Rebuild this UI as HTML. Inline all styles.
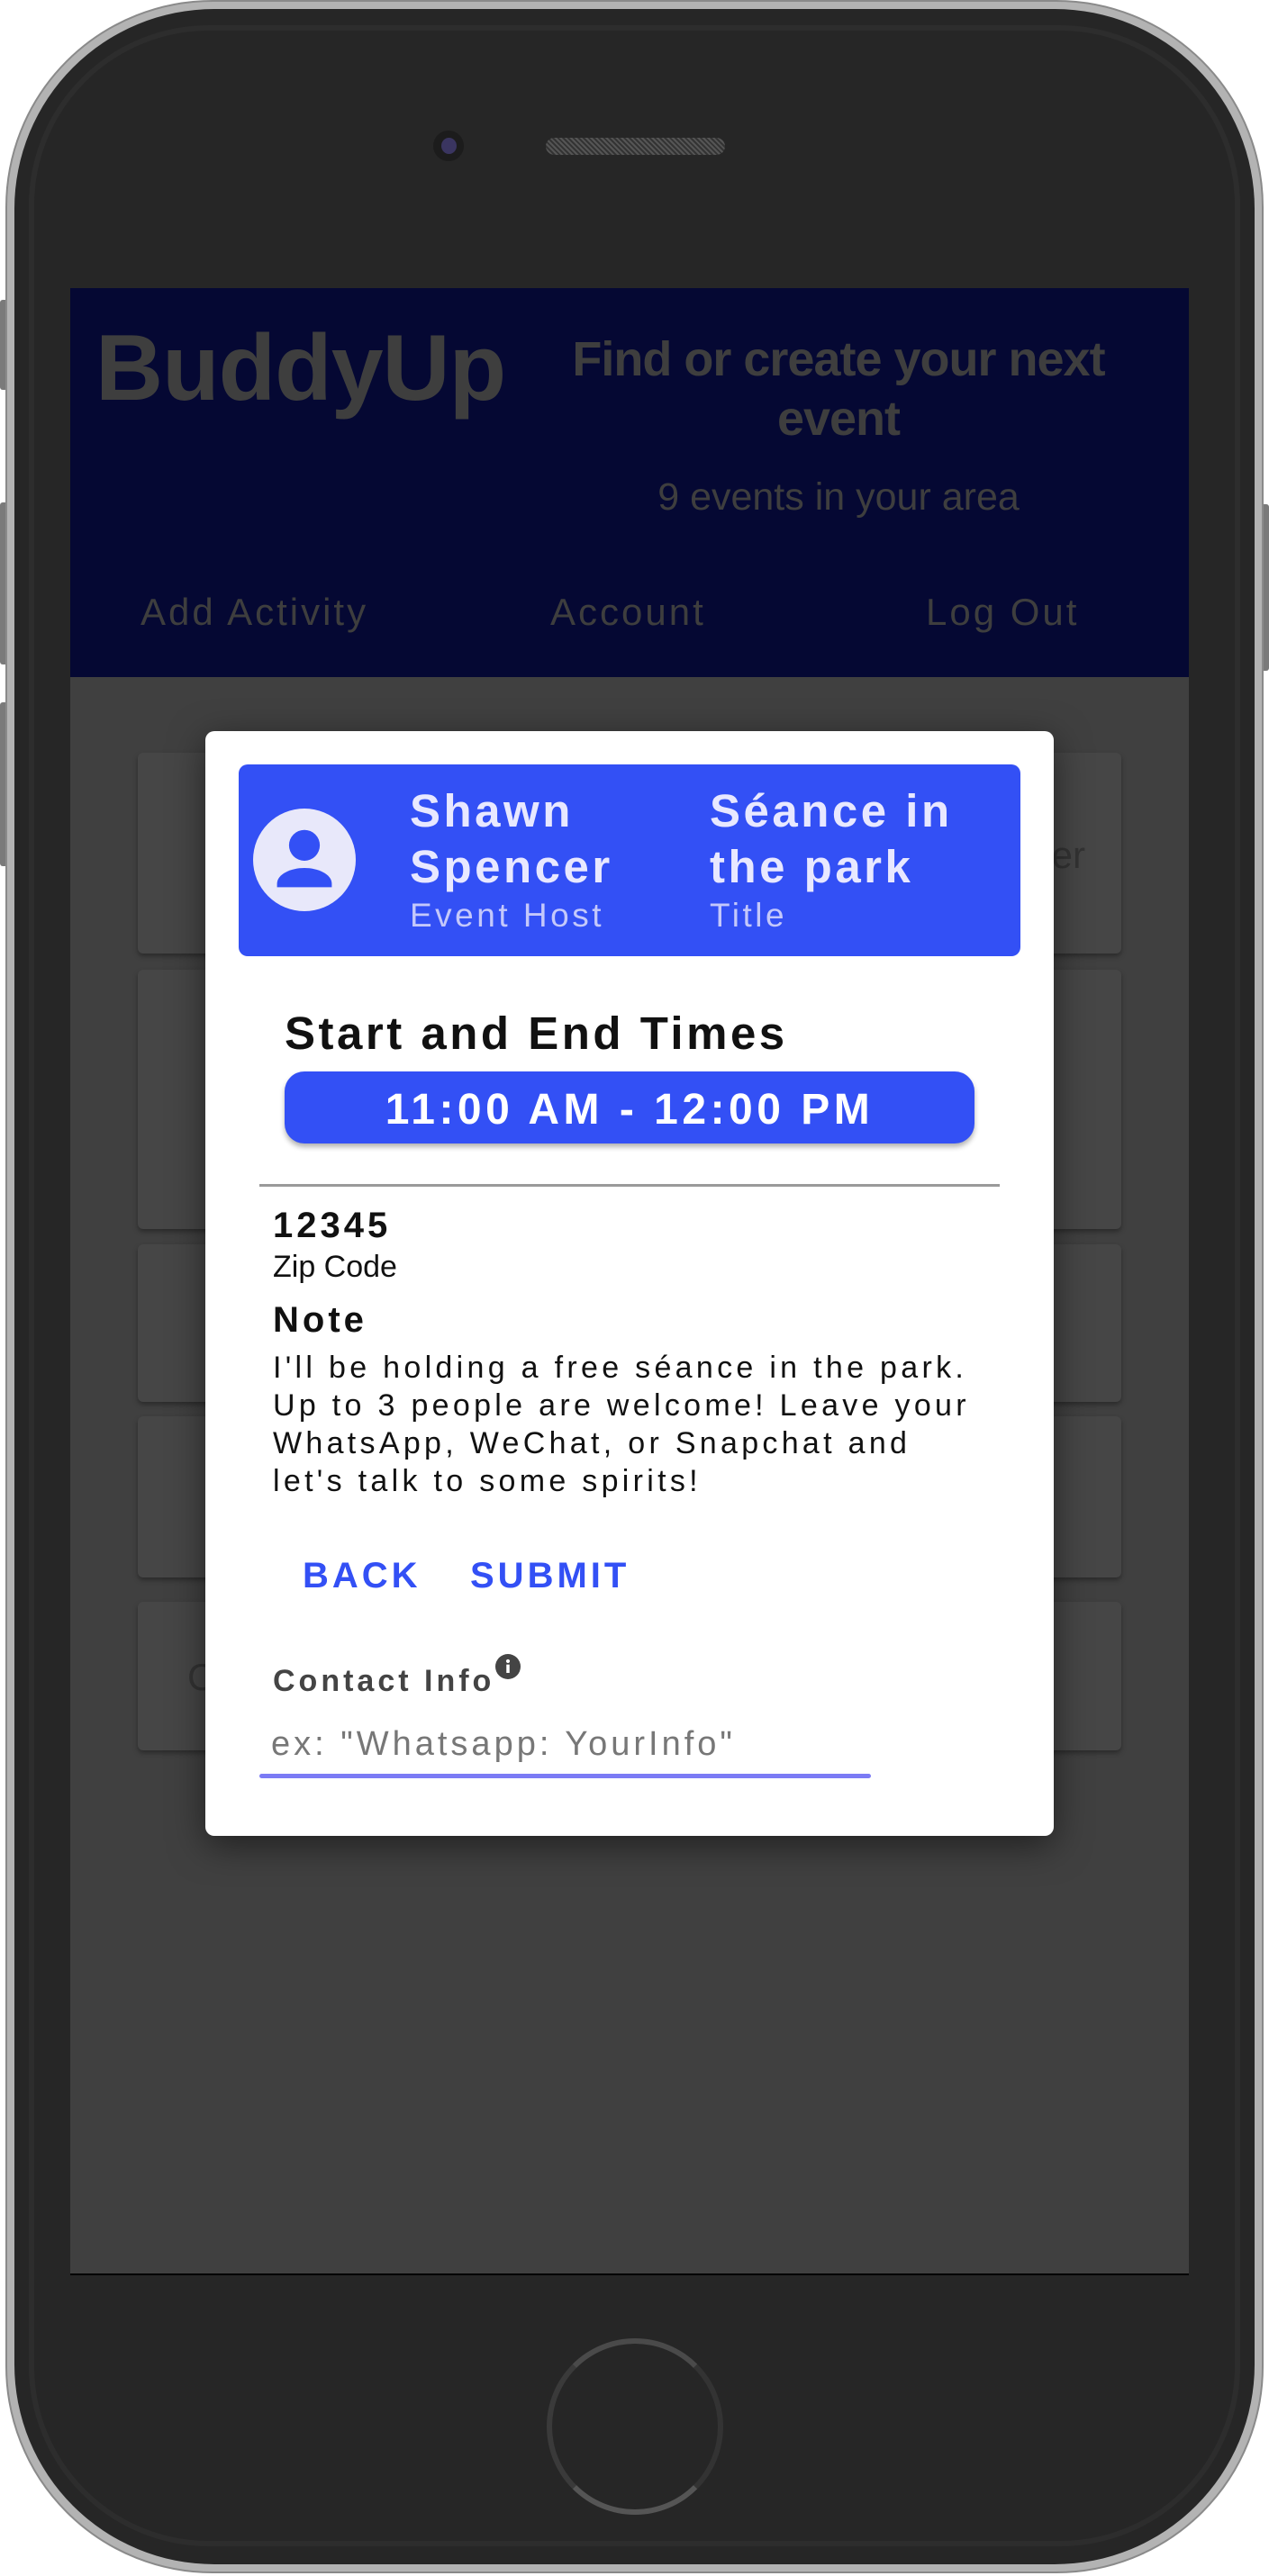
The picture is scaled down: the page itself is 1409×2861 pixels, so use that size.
<!DOCTYPE html>
<html><head><meta charset="utf-8"><style>
*{margin:0;padding:0;box-sizing:border-box}
body{width:1409px;height:2861px;background:#fff;position:relative;overflow:hidden;font-family:"Liberation Sans",sans-serif}
.abs{position:absolute}
.btn{position:absolute;background:#7a7a7a;border-radius:3px}
.phone{left:6px;top:0px;width:1397px;height:2858px;background:#b3b3b3;border-radius:230px;border:2px solid #8a8a8a}
.body{left:16px;top:10px;width:1377px;height:2838px;background:#262626;border-radius:222px}
.ring{left:32px;top:28px;width:1345px;height:2800px;border:6px solid #2d2d2d;border-radius:200px}
.screen{left:78px;top:320px;width:1242px;height:2207px;background:#404040;border-bottom:2px solid #000}
.hdr{left:78px;top:320px;width:1242px;height:432px;background:#050833;color:#3e3e3e}
.card{position:absolute;left:153px;width:1092px;background:#464646;border-radius:6px;box-shadow:0 3px 6px rgba(0,0,0,.35)}
.modal{left:228px;top:812px;width:942px;height:1227px;background:#fff;border-radius:10px;box-shadow:0 10px 40px rgba(0,0,0,.5)}
.t{position:absolute;white-space:nowrap}
</style></head><body>
<div class="btn" style="left:0;top:333px;width:9px;height:100px"></div>
<div class="btn" style="left:0;top:558px;width:9px;height:180px"></div>
<div class="btn" style="left:0;top:780px;width:9px;height:182px"></div>
<div class="btn" style="left:1400px;top:560px;width:9px;height:185px"></div>
<div class="abs phone"></div>
<div class="abs body"></div>
<div class="abs ring"></div>
<div class="abs" style="left:481px;top:145px;width:34px;height:34px;border-radius:50%;background:#1c1c1c"></div>
<div class="abs" style="left:490px;top:153px;width:17px;height:18px;border-radius:50%;background:#3a3560"></div>
<div class="abs" style="left:606px;top:153px;width:199px;height:19px;border-radius:10px;background:repeating-linear-gradient(45deg,#555 0 2px,#333 2px 4px)"></div>
<div class="abs" style="left:607px;top:2597px;width:196px;height:196px;border-radius:50%;border:6px solid #555;border-top-color:#4a4a4a;border-right-color:#333;border-left-color:#3a3a3a"></div>

<div class="abs screen"></div>
<div class="card" style="top:836px;height:223px"><div class="t" style="right:40px;top:90px;font-size:42px;color:#333">er</div></div>
<div class="card" style="top:1077px;height:288px"></div>
<div class="card" style="top:1382px;height:175px"></div>
<div class="card" style="top:1573px;height:179px"></div>
<div class="card" style="top:1779px;height:165px"><div class="t" style="left:55px;top:60px;font-size:42px;color:#333">C</div></div>

<div class="abs hdr">
 <div class="t" style="left:28px;top:30px;font-size:104px;font-weight:bold;letter-spacing:-1px">BuddyUp</div>
 <div class="t" style="left:520px;top:46px;width:666px;text-align:center;font-size:54px;font-weight:bold;line-height:66px;white-space:normal;letter-spacing:-1px">Find or create your next event</div>
 <div class="t" style="left:520px;top:208px;width:666px;text-align:center;font-size:43px">9 events in your area</div>
 <div class="t" style="left:78px;top:336px;font-size:42px;letter-spacing:3px">Add Activity</div>
 <div class="t" style="left:533px;top:336px;font-size:42px;letter-spacing:3px">Account</div>
 <div class="t" style="left:950px;top:336px;font-size:42px;letter-spacing:3px">Log Out</div>
</div>

<div class="abs modal">
 <div class="abs" style="left:37px;top:37px;width:868px;height:213px;background:#3350f5;border-radius:10px"></div>
 <svg class="abs" style="left:53px;top:86px" width="114" height="114" viewBox="0 0 24 24"><circle cx="12" cy="12" r="12" fill="#e8e8fa"/><circle cx="12" cy="8.6" r="3.6" fill="#3350f5"/><path d="M5.6 17.6c0-2.3 3.3-3.7 6.4-3.7s6.4 1.4 6.4 3.7v.8H5.6z" fill="#3350f5"/></svg>
 <div class="t" style="left:227px;top:58px;font-size:51px;line-height:62px;color:#e8e8ff;letter-spacing:3.5px;font-weight:bold">Shawn<br>Spencer</div>
 <div class="t" style="left:227px;top:184px;font-size:37px;color:#c4c8fb;letter-spacing:3.5px">Event Host</div>
 <div class="t" style="left:560px;top:58px;font-size:51px;line-height:62px;color:#e8e8ff;letter-spacing:3.5px;font-weight:bold">Séance in<br>the park</div>
 <div class="t" style="left:560px;top:184px;font-size:37px;color:#c4c8fb;letter-spacing:3.5px">Title</div>
 <div class="t" style="left:88px;top:306px;font-size:51px;font-weight:bold;letter-spacing:3.5px;color:#111">Start and End Times</div>
 <div class="abs" style="left:88px;top:378px;width:766px;height:80px;background:#3350f5;border-radius:22px;box-shadow:0 4px 6px rgba(0,0,0,.3)"></div>
 <div class="t" style="left:88px;top:393px;width:766px;text-align:center;font-size:48px;color:#fff;letter-spacing:4.5px;font-weight:bold">11:00 AM - 12:00 PM</div>
 <div class="abs" style="left:60px;top:503px;width:822px;height:3px;background:#9a9a9a"></div>
 <div class="t" style="left:75px;top:527px;font-size:40px;font-weight:bold;letter-spacing:4px;color:#111">12345</div>
 <div class="t" style="left:75px;top:576px;font-size:34px;color:#111">Zip Code</div>
 <div class="t" style="left:75px;top:632px;font-size:40px;font-weight:bold;letter-spacing:4px;color:#111">Note</div>
 <div class="t" style="left:75px;top:686px;font-size:34px;line-height:42px;letter-spacing:4.3px;color:#111">I'll be holding a free séance in the park.<br>Up to 3 people are welcome! Leave your<br>WhatsApp, WeChat, or Snapchat and<br>let's talk to some spirits!</div>
 <div class="t" style="left:108px;top:916px;font-size:40px;letter-spacing:4px;color:#3350f5;font-weight:bold">BACK</div>
 <div class="t" style="left:294px;top:916px;font-size:40px;letter-spacing:4px;color:#3350f5;font-weight:bold">SUBMIT</div>
 <div class="t" style="left:75px;top:1036px;font-size:34px;letter-spacing:4px;color:#444;font-weight:bold">Contact Info</div>
 <svg class="abs" style="left:322px;top:1025px" width="28" height="28" viewBox="0 0 24 24"><circle cx="12" cy="12" r="12" fill="#444"/><rect x="10.5" y="10" width="3" height="8" fill="#fff"/><circle cx="12" cy="6.8" r="1.8" fill="#fff"/></svg>
 <div class="t" style="left:73px;top:1104px;font-size:38px;letter-spacing:4px;color:#777">ex: "Whatsapp: YourInfo"</div>
 <div class="abs" style="left:60px;top:1158px;width:679px;height:5px;background:#7b7bf5;border-radius:3px"></div>
</div>
</body></html>
